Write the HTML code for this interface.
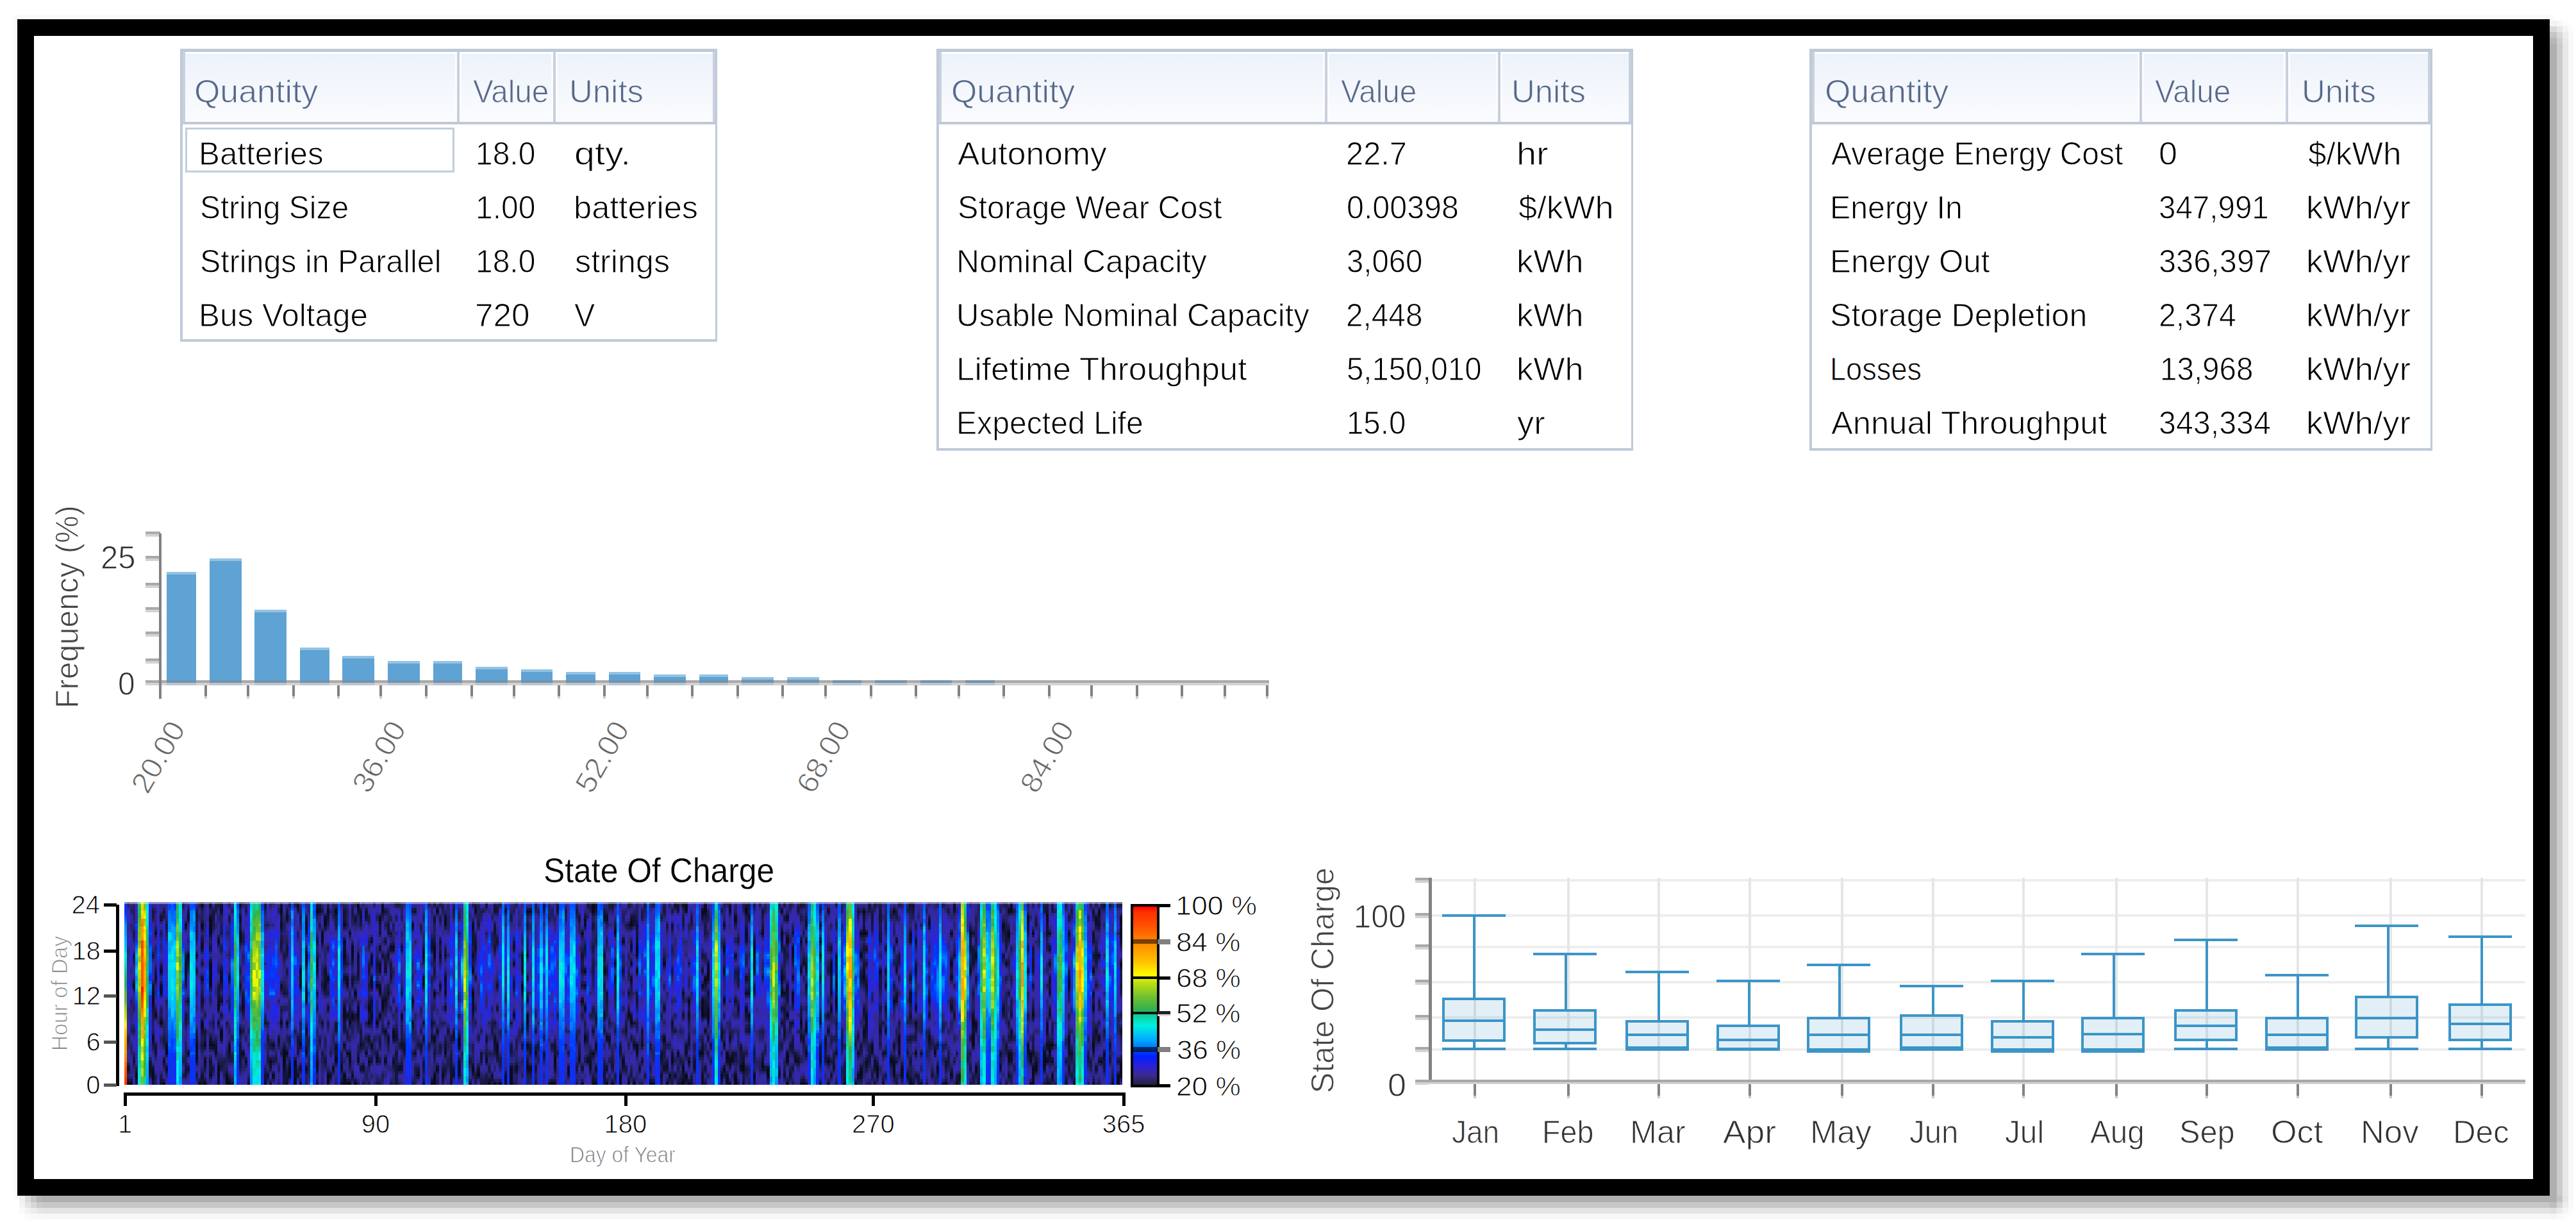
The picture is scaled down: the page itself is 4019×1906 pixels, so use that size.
<!DOCTYPE html><html><head><meta charset="utf-8"><style>
html,body{margin:0;padding:0;background:#fff;}
body{width:4019px;height:1906px;position:relative;overflow:hidden;font-family:"Liberation Sans", sans-serif;}
div{box-sizing:border-box;}
</style></head><body>
<div style="position:absolute;left:21.0px;top:23.0px;width:3963.0px;height:1848.0px;background:#fafafa;"></div>
<div style="position:absolute;left:3978.0px;top:32.0px;width:11.0px;height:8.7px;background:rgb(243,243,243);"></div>
<div style="position:absolute;left:3978.0px;top:40.7px;width:11.0px;height:9.1px;background:rgb(217,217,217);"></div>
<div style="position:absolute;left:3978.0px;top:49.8px;width:11.0px;height:9.2px;background:rgb(197,197,197);"></div>
<div style="position:absolute;left:3978.0px;top:59.0px;width:11.0px;height:9.0px;background:rgb(183,183,183);"></div>
<div style="position:absolute;left:3978.0px;top:68.0px;width:11.0px;height:1797.0px;background:rgb(175,175,175);"></div>
<div style="position:absolute;left:3989.0px;top:32.0px;width:9.0px;height:8.7px;background:rgb(247,247,247);"></div>
<div style="position:absolute;left:3989.0px;top:40.7px;width:9.0px;height:9.1px;background:rgb(231,231,231);"></div>
<div style="position:absolute;left:3989.0px;top:49.8px;width:9.0px;height:9.2px;background:rgb(217,217,217);"></div>
<div style="position:absolute;left:3989.0px;top:59.0px;width:9.0px;height:9.0px;background:rgb(208,208,208);"></div>
<div style="position:absolute;left:3989.0px;top:68.0px;width:9.0px;height:1797.0px;background:rgb(203,203,203);"></div>
<div style="position:absolute;left:3998.0px;top:32.0px;width:9.0px;height:8.7px;background:rgb(252,252,252);"></div>
<div style="position:absolute;left:3998.0px;top:40.7px;width:9.0px;height:9.1px;background:rgb(244,244,244);"></div>
<div style="position:absolute;left:3998.0px;top:49.8px;width:9.0px;height:9.2px;background:rgb(238,238,238);"></div>
<div style="position:absolute;left:3998.0px;top:59.0px;width:9.0px;height:9.0px;background:rgb(234,234,234);"></div>
<div style="position:absolute;left:3998.0px;top:68.0px;width:9.0px;height:1797.0px;background:rgb(232,232,232);"></div>
<div style="position:absolute;left:4007.0px;top:32.0px;width:8.0px;height:8.7px;background:rgb(254,254,254);"></div>
<div style="position:absolute;left:4007.0px;top:40.7px;width:8.0px;height:9.1px;background:rgb(252,252,252);"></div>
<div style="position:absolute;left:4007.0px;top:49.8px;width:8.0px;height:9.2px;background:rgb(250,250,250);"></div>
<div style="position:absolute;left:4007.0px;top:59.0px;width:8.0px;height:9.0px;background:rgb(249,249,249);"></div>
<div style="position:absolute;left:4007.0px;top:68.0px;width:8.0px;height:1797.0px;background:rgb(248,248,248);"></div>
<div style="position:absolute;left:30.0px;top:1865.0px;width:9.0px;height:9.5px;background:rgb(240,240,240);"></div>
<div style="position:absolute;left:39.0px;top:1865.0px;width:8.5px;height:9.5px;background:rgb(218,218,218);"></div>
<div style="position:absolute;left:47.5px;top:1865.0px;width:9.2px;height:9.5px;background:rgb(197,197,197);"></div>
<div style="position:absolute;left:56.7px;top:1865.0px;width:8.6px;height:9.5px;background:rgb(181,181,181);"></div>
<div style="position:absolute;left:65.3px;top:1865.0px;width:3912.7px;height:9.5px;background:rgb(175,175,175);"></div>
<div style="position:absolute;left:30.0px;top:1874.5px;width:9.0px;height:9.5px;background:rgb(244,244,244);"></div>
<div style="position:absolute;left:39.0px;top:1874.5px;width:8.5px;height:9.5px;background:rgb(229,229,229);"></div>
<div style="position:absolute;left:47.5px;top:1874.5px;width:9.2px;height:9.5px;background:rgb(215,215,215);"></div>
<div style="position:absolute;left:56.7px;top:1874.5px;width:8.6px;height:9.5px;background:rgb(203,203,203);"></div>
<div style="position:absolute;left:65.3px;top:1874.5px;width:3912.7px;height:9.5px;background:rgb(199,199,199);"></div>
<div style="position:absolute;left:30.0px;top:1884.0px;width:9.0px;height:9.0px;background:rgb(250,250,250);"></div>
<div style="position:absolute;left:39.0px;top:1884.0px;width:8.5px;height:9.0px;background:rgb(243,243,243);"></div>
<div style="position:absolute;left:47.5px;top:1884.0px;width:9.2px;height:9.0px;background:rgb(236,236,236);"></div>
<div style="position:absolute;left:56.7px;top:1884.0px;width:8.6px;height:9.0px;background:rgb(230,230,230);"></div>
<div style="position:absolute;left:65.3px;top:1884.0px;width:3912.7px;height:9.0px;background:rgb(228,228,228);"></div>
<div style="position:absolute;left:30.0px;top:1893.0px;width:9.0px;height:9.0px;background:rgb(254,254,254);"></div>
<div style="position:absolute;left:39.0px;top:1893.0px;width:8.5px;height:9.0px;background:rgb(251,251,251);"></div>
<div style="position:absolute;left:47.5px;top:1893.0px;width:9.2px;height:9.0px;background:rgb(249,249,249);"></div>
<div style="position:absolute;left:56.7px;top:1893.0px;width:8.6px;height:9.0px;background:rgb(248,248,248);"></div>
<div style="position:absolute;left:65.3px;top:1893.0px;width:3912.7px;height:9.0px;background:rgb(247,247,247);"></div>
<div style="position:absolute;left:3978.0px;top:1865.0px;width:11.0px;height:9.5px;background:rgb(175,175,175);"></div>
<div style="position:absolute;left:3989.0px;top:1865.0px;width:9.0px;height:9.5px;background:rgb(195,195,195);"></div>
<div style="position:absolute;left:3998.0px;top:1865.0px;width:9.0px;height:9.5px;background:rgb(229,229,229);"></div>
<div style="position:absolute;left:4007.0px;top:1865.0px;width:8.0px;height:9.5px;background:rgb(247,247,247);"></div>
<div style="position:absolute;left:3978.0px;top:1874.5px;width:11.0px;height:9.5px;background:rgb(190,190,190);"></div>
<div style="position:absolute;left:3989.0px;top:1874.5px;width:9.0px;height:9.5px;background:rgb(213,213,213);"></div>
<div style="position:absolute;left:3998.0px;top:1874.5px;width:9.0px;height:9.5px;background:rgb(237,237,237);"></div>
<div style="position:absolute;left:4007.0px;top:1874.5px;width:8.0px;height:9.5px;background:rgb(249,249,249);"></div>
<div style="position:absolute;left:3978.0px;top:1884.0px;width:11.0px;height:9.0px;background:rgb(224,224,224);"></div>
<div style="position:absolute;left:3989.0px;top:1884.0px;width:9.0px;height:9.0px;background:rgb(235,235,235);"></div>
<div style="position:absolute;left:3998.0px;top:1884.0px;width:9.0px;height:9.0px;background:rgb(246,246,246);"></div>
<div style="position:absolute;left:4007.0px;top:1884.0px;width:8.0px;height:9.0px;background:rgb(252,252,252);"></div>
<div style="position:absolute;left:3978.0px;top:1893.0px;width:11.0px;height:9.0px;background:rgb(246,246,246);"></div>
<div style="position:absolute;left:3989.0px;top:1893.0px;width:9.0px;height:9.0px;background:rgb(249,249,249);"></div>
<div style="position:absolute;left:3998.0px;top:1893.0px;width:9.0px;height:9.0px;background:rgb(252,252,252);"></div>
<div style="position:absolute;left:4007.0px;top:1893.0px;width:8.0px;height:9.0px;background:rgb(254,254,254);"></div>
<div style="position:absolute;left:27.0px;top:30.0px;width:3951.0px;height:1835.0px;background:#000;"></div>
<div style="position:absolute;left:53.0px;top:56.0px;width:3899.0px;height:1783.0px;background:#fff;"></div>
<div style="position:absolute;left:281.0px;top:76.0px;width:838.0px;height:457.0px;background:#bfcad8;"></div>
<div style="position:absolute;left:285.0px;top:81.0px;width:831.0px;height:448.0px;background:#fff;"></div>
<div style="position:absolute;left:289.0px;top:84.0px;width:823.0px;height:106.0px;background:linear-gradient(#edf2fa,#fbfcfe);"></div>
<div style="position:absolute;left:285.0px;top:81.0px;width:4.0px;height:109.0px;background:#c8d1dd;"></div>
<div style="position:absolute;left:1112.0px;top:81.0px;width:4.0px;height:109.0px;background:#c8d1dd;"></div>
<div style="position:absolute;left:285.0px;top:190.0px;width:831.0px;height:4.0px;background:#bfcad8;"></div>
<div style="position:absolute;left:713.0px;top:81.0px;width:4.0px;height:109.0px;background:#c8d1dd;"></div>
<div style="position:absolute;left:710.0px;top:84.0px;width:3.0px;height:106.0px;background:#fbfcfe;"></div>
<div style="position:absolute;left:717.0px;top:84.0px;width:3.0px;height:106.0px;background:#fbfcfe;"></div>
<div style="position:absolute;left:863.0px;top:81.0px;width:4.0px;height:109.0px;background:#c8d1dd;"></div>
<div style="position:absolute;left:860.0px;top:84.0px;width:3.0px;height:106.0px;background:#fbfcfe;"></div>
<div style="position:absolute;left:867.0px;top:84.0px;width:3.0px;height:106.0px;background:#fbfcfe;"></div>
<div style="position:absolute;left:302.7px;top:114.2px;font-size:50px;color:#56698a;white-space:pre;line-height:normal;transform:scaleX(1.0380);transform-origin:0 0;-webkit-text-stroke:1px #f3f6fb;">Quantity</div>
<div style="position:absolute;left:737.8px;top:114.2px;font-size:50px;color:#56698a;white-space:pre;line-height:normal;transform:scaleX(0.9528);transform-origin:0 0;-webkit-text-stroke:1px #f3f6fb;">Value</div>
<div style="position:absolute;left:887.7px;top:114.2px;font-size:50px;color:#56698a;white-space:pre;line-height:normal;transform:scaleX(1.0184);transform-origin:0 0;-webkit-text-stroke:1px #f3f6fb;">Units</div>
<div style="position:absolute;left:310.1px;top:211.2px;font-size:50px;color:#000;white-space:pre;line-height:normal;transform:scaleX(0.9869);transform-origin:0 0;-webkit-text-stroke:1px #fff;">Batteries</div>
<div style="position:absolute;left:742.4px;top:211.2px;font-size:50px;color:#000;white-space:pre;line-height:normal;transform:scaleX(0.9591);transform-origin:0 0;-webkit-text-stroke:1px #fff;">18.0</div>
<div style="position:absolute;left:895.7px;top:211.2px;font-size:50px;color:#000;white-space:pre;line-height:normal;transform:scaleX(1.1489);transform-origin:0 0;-webkit-text-stroke:1px #fff;">qty.</div>
<div style="position:absolute;left:311.8px;top:295.2px;font-size:50px;color:#000;white-space:pre;line-height:normal;transform:scaleX(0.9600);transform-origin:0 0;-webkit-text-stroke:1px #fff;">String Size</div>
<div style="position:absolute;left:742.4px;top:295.2px;font-size:50px;color:#000;white-space:pre;line-height:normal;transform:scaleX(0.9591);transform-origin:0 0;-webkit-text-stroke:1px #fff;">1.00</div>
<div style="position:absolute;left:894.7px;top:295.2px;font-size:50px;color:#000;white-space:pre;line-height:normal;transform:scaleX(1.0120);transform-origin:0 0;-webkit-text-stroke:1px #fff;">batteries</div>
<div style="position:absolute;left:311.8px;top:379.2px;font-size:50px;color:#000;white-space:pre;line-height:normal;transform:scaleX(0.9674);transform-origin:0 0;-webkit-text-stroke:1px #fff;">Strings in Parallel</div>
<div style="position:absolute;left:742.4px;top:379.2px;font-size:50px;color:#000;white-space:pre;line-height:normal;transform:scaleX(0.9591);transform-origin:0 0;-webkit-text-stroke:1px #fff;">18.0</div>
<div style="position:absolute;left:896.7px;top:379.2px;font-size:50px;color:#000;white-space:pre;line-height:normal;transform:scaleX(1.0052);transform-origin:0 0;-webkit-text-stroke:1px #fff;">strings</div>
<div style="position:absolute;left:310.0px;top:463.2px;font-size:50px;color:#000;white-space:pre;line-height:normal;transform:scaleX(0.9895);transform-origin:0 0;-webkit-text-stroke:1px #fff;">Bus Voltage</div>
<div style="position:absolute;left:741.4px;top:463.2px;font-size:50px;color:#000;white-space:pre;line-height:normal;transform:scaleX(1.0253);transform-origin:0 0;-webkit-text-stroke:1px #fff;">720</div>
<div style="position:absolute;left:895.8px;top:463.2px;font-size:50px;color:#000;white-space:pre;line-height:normal;transform:scaleX(0.9697);transform-origin:0 0;-webkit-text-stroke:1px #fff;">V</div>
<div style="position:absolute;left:289px;top:199px;width:420px;height:70px;border:3px solid #c3cddb;"></div>
<div style="position:absolute;left:1461.0px;top:76.0px;width:1087.0px;height:627.0px;background:#bfcad8;"></div>
<div style="position:absolute;left:1465.0px;top:81.0px;width:1080.0px;height:618.0px;background:#fff;"></div>
<div style="position:absolute;left:1469.0px;top:84.0px;width:1072.0px;height:106.0px;background:linear-gradient(#edf2fa,#fbfcfe);"></div>
<div style="position:absolute;left:1465.0px;top:81.0px;width:4.0px;height:109.0px;background:#c8d1dd;"></div>
<div style="position:absolute;left:2541.0px;top:81.0px;width:4.0px;height:109.0px;background:#c8d1dd;"></div>
<div style="position:absolute;left:1465.0px;top:190.0px;width:1080.0px;height:4.0px;background:#bfcad8;"></div>
<div style="position:absolute;left:2067.0px;top:81.0px;width:4.0px;height:109.0px;background:#c8d1dd;"></div>
<div style="position:absolute;left:2064.0px;top:84.0px;width:3.0px;height:106.0px;background:#fbfcfe;"></div>
<div style="position:absolute;left:2071.0px;top:84.0px;width:3.0px;height:106.0px;background:#fbfcfe;"></div>
<div style="position:absolute;left:2337.0px;top:81.0px;width:4.0px;height:109.0px;background:#c8d1dd;"></div>
<div style="position:absolute;left:2334.0px;top:84.0px;width:3.0px;height:106.0px;background:#fbfcfe;"></div>
<div style="position:absolute;left:2341.0px;top:84.0px;width:3.0px;height:106.0px;background:#fbfcfe;"></div>
<div style="position:absolute;left:1483.7px;top:114.2px;font-size:50px;color:#56698a;white-space:pre;line-height:normal;transform:scaleX(1.0380);transform-origin:0 0;-webkit-text-stroke:1px #f3f6fb;">Quantity</div>
<div style="position:absolute;left:2092.3px;top:114.2px;font-size:50px;color:#56698a;white-space:pre;line-height:normal;transform:scaleX(0.9528);transform-origin:0 0;-webkit-text-stroke:1px #f3f6fb;">Value</div>
<div style="position:absolute;left:2358.2px;top:114.2px;font-size:50px;color:#56698a;white-space:pre;line-height:normal;transform:scaleX(1.0184);transform-origin:0 0;-webkit-text-stroke:1px #f3f6fb;">Units</div>
<div style="position:absolute;left:1494.0px;top:211.2px;font-size:50px;color:#000;white-space:pre;line-height:normal;transform:scaleX(1.0344);transform-origin:0 0;-webkit-text-stroke:1px #fff;">Autonomy</div>
<div style="position:absolute;left:2100.2px;top:211.2px;font-size:50px;color:#000;white-space:pre;line-height:normal;transform:scaleX(0.9756);transform-origin:0 0;-webkit-text-stroke:1px #fff;">22.7</div>
<div style="position:absolute;left:2365.6px;top:211.2px;font-size:50px;color:#000;white-space:pre;line-height:normal;transform:scaleX(1.1180);transform-origin:0 0;-webkit-text-stroke:1px #fff;">hr</div>
<div style="position:absolute;left:1493.8px;top:295.2px;font-size:50px;color:#000;white-space:pre;line-height:normal;transform:scaleX(0.9721);transform-origin:0 0;-webkit-text-stroke:1px #fff;">Storage Wear Cost</div>
<div style="position:absolute;left:2100.7px;top:295.2px;font-size:50px;color:#000;white-space:pre;line-height:normal;transform:scaleX(0.9675);transform-origin:0 0;-webkit-text-stroke:1px #fff;">0.00398</div>
<div style="position:absolute;left:2369.0px;top:295.2px;font-size:50px;color:#000;white-space:pre;line-height:normal;transform:scaleX(1.0488);transform-origin:0 0;-webkit-text-stroke:1px #fff;">$/kWh</div>
<div style="position:absolute;left:1492.0px;top:379.2px;font-size:50px;color:#000;white-space:pre;line-height:normal;transform:scaleX(0.9981);transform-origin:0 0;-webkit-text-stroke:1px #fff;">Nominal Capacity</div>
<div style="position:absolute;left:2100.9px;top:379.2px;font-size:50px;color:#000;white-space:pre;line-height:normal;transform:scaleX(0.9465);transform-origin:0 0;-webkit-text-stroke:1px #fff;">3,060</div>
<div style="position:absolute;left:2366.1px;top:379.2px;font-size:50px;color:#000;white-space:pre;line-height:normal;transform:scaleX(1.0453);transform-origin:0 0;-webkit-text-stroke:1px #fff;">kWh</div>
<div style="position:absolute;left:1492.3px;top:463.2px;font-size:50px;color:#000;white-space:pre;line-height:normal;transform:scaleX(0.9812);transform-origin:0 0;-webkit-text-stroke:1px #fff;">Usable Nominal Capacity</div>
<div style="position:absolute;left:2100.2px;top:463.2px;font-size:50px;color:#000;white-space:pre;line-height:normal;transform:scaleX(0.9544);transform-origin:0 0;-webkit-text-stroke:1px #fff;">2,448</div>
<div style="position:absolute;left:2366.1px;top:463.2px;font-size:50px;color:#000;white-space:pre;line-height:normal;transform:scaleX(1.0453);transform-origin:0 0;-webkit-text-stroke:1px #fff;">kWh</div>
<div style="position:absolute;left:1491.9px;top:547.2px;font-size:50px;color:#000;white-space:pre;line-height:normal;transform:scaleX(1.0216);transform-origin:0 0;-webkit-text-stroke:1px #fff;">Lifetime Throughput</div>
<div style="position:absolute;left:2100.7px;top:547.2px;font-size:50px;color:#000;white-space:pre;line-height:normal;transform:scaleX(0.9463);transform-origin:0 0;-webkit-text-stroke:1px #fff;">5,150,010</div>
<div style="position:absolute;left:2366.1px;top:547.2px;font-size:50px;color:#000;white-space:pre;line-height:normal;transform:scaleX(1.0453);transform-origin:0 0;-webkit-text-stroke:1px #fff;">kWh</div>
<div style="position:absolute;left:1492.1px;top:631.2px;font-size:50px;color:#000;white-space:pre;line-height:normal;transform:scaleX(0.9630);transform-origin:0 0;-webkit-text-stroke:1px #fff;">Expected Life</div>
<div style="position:absolute;left:2101.1px;top:631.2px;font-size:50px;color:#000;white-space:pre;line-height:normal;transform:scaleX(0.9482);transform-origin:0 0;-webkit-text-stroke:1px #fff;">15.0</div>
<div style="position:absolute;left:2367.0px;top:631.2px;font-size:50px;color:#000;white-space:pre;line-height:normal;transform:scaleX(1.0488);transform-origin:0 0;-webkit-text-stroke:1px #fff;">yr</div>
<div style="position:absolute;left:2823.0px;top:76.0px;width:972.0px;height:627.0px;background:#bfcad8;"></div>
<div style="position:absolute;left:2827.0px;top:81.0px;width:965.0px;height:618.0px;background:#fff;"></div>
<div style="position:absolute;left:2831.0px;top:84.0px;width:957.0px;height:106.0px;background:linear-gradient(#edf2fa,#fbfcfe);"></div>
<div style="position:absolute;left:2827.0px;top:81.0px;width:4.0px;height:109.0px;background:#c8d1dd;"></div>
<div style="position:absolute;left:3788.0px;top:81.0px;width:4.0px;height:109.0px;background:#c8d1dd;"></div>
<div style="position:absolute;left:2827.0px;top:190.0px;width:965.0px;height:4.0px;background:#bfcad8;"></div>
<div style="position:absolute;left:3338.0px;top:81.0px;width:4.0px;height:109.0px;background:#c8d1dd;"></div>
<div style="position:absolute;left:3335.0px;top:84.0px;width:3.0px;height:106.0px;background:#fbfcfe;"></div>
<div style="position:absolute;left:3342.0px;top:84.0px;width:3.0px;height:106.0px;background:#fbfcfe;"></div>
<div style="position:absolute;left:3566.0px;top:81.0px;width:4.0px;height:109.0px;background:#c8d1dd;"></div>
<div style="position:absolute;left:3563.0px;top:84.0px;width:3.0px;height:106.0px;background:#fbfcfe;"></div>
<div style="position:absolute;left:3570.0px;top:84.0px;width:3.0px;height:106.0px;background:#fbfcfe;"></div>
<div style="position:absolute;left:2846.7px;top:114.2px;font-size:50px;color:#56698a;white-space:pre;line-height:normal;transform:scaleX(1.0380);transform-origin:0 0;-webkit-text-stroke:1px #f3f6fb;">Quantity</div>
<div style="position:absolute;left:3362.4px;top:114.2px;font-size:50px;color:#56698a;white-space:pre;line-height:normal;transform:scaleX(0.9528);transform-origin:0 0;-webkit-text-stroke:1px #f3f6fb;">Value</div>
<div style="position:absolute;left:3590.9px;top:114.2px;font-size:50px;color:#56698a;white-space:pre;line-height:normal;transform:scaleX(1.0184);transform-origin:0 0;-webkit-text-stroke:1px #f3f6fb;">Units</div>
<div style="position:absolute;left:2857.0px;top:211.2px;font-size:50px;color:#000;white-space:pre;line-height:normal;transform:scaleX(0.9599);transform-origin:0 0;-webkit-text-stroke:1px #fff;">Average Energy Cost</div>
<div style="position:absolute;left:3367.9px;top:211.2px;font-size:50px;color:#000;white-space:pre;line-height:normal;transform:scaleX(1.0417);transform-origin:0 0;-webkit-text-stroke:1px #fff;">0</div>
<div style="position:absolute;left:3601.2px;top:211.2px;font-size:50px;color:#000;white-space:pre;line-height:normal;transform:scaleX(1.0271);transform-origin:0 0;-webkit-text-stroke:1px #fff;">$/kWh</div>
<div style="position:absolute;left:2855.1px;top:295.2px;font-size:50px;color:#000;white-space:pre;line-height:normal;transform:scaleX(0.9662);transform-origin:0 0;-webkit-text-stroke:1px #fff;">Energy In</div>
<div style="position:absolute;left:3368.3px;top:295.2px;font-size:50px;color:#000;white-space:pre;line-height:normal;transform:scaleX(0.9505);transform-origin:0 0;-webkit-text-stroke:1px #fff;">347,991</div>
<div style="position:absolute;left:3598.3px;top:295.2px;font-size:50px;color:#000;white-space:pre;line-height:normal;transform:scaleX(1.0478);transform-origin:0 0;-webkit-text-stroke:1px #fff;">kWh/yr</div>
<div style="position:absolute;left:2855.1px;top:379.2px;font-size:50px;color:#000;white-space:pre;line-height:normal;transform:scaleX(0.9859);transform-origin:0 0;-webkit-text-stroke:1px #fff;">Energy Out</div>
<div style="position:absolute;left:3368.3px;top:379.2px;font-size:50px;color:#000;white-space:pre;line-height:normal;transform:scaleX(0.9745);transform-origin:0 0;-webkit-text-stroke:1px #fff;">336,397</div>
<div style="position:absolute;left:3598.3px;top:379.2px;font-size:50px;color:#000;white-space:pre;line-height:normal;transform:scaleX(1.0478);transform-origin:0 0;-webkit-text-stroke:1px #fff;">kWh/yr</div>
<div style="position:absolute;left:2854.7px;top:463.2px;font-size:50px;color:#000;white-space:pre;line-height:normal;transform:scaleX(1.0025);transform-origin:0 0;-webkit-text-stroke:1px #fff;">Storage Depletion</div>
<div style="position:absolute;left:3367.6px;top:463.2px;font-size:50px;color:#000;white-space:pre;line-height:normal;transform:scaleX(0.9649);transform-origin:0 0;-webkit-text-stroke:1px #fff;">2,374</div>
<div style="position:absolute;left:3598.3px;top:463.2px;font-size:50px;color:#000;white-space:pre;line-height:normal;transform:scaleX(1.0478);transform-origin:0 0;-webkit-text-stroke:1px #fff;">kWh/yr</div>
<div style="position:absolute;left:2855.4px;top:547.2px;font-size:50px;color:#000;white-space:pre;line-height:normal;transform:scaleX(0.9034);transform-origin:0 0;-webkit-text-stroke:1px #fff;">Losses</div>
<div style="position:absolute;left:3370.4px;top:547.2px;font-size:50px;color:#000;white-space:pre;line-height:normal;transform:scaleX(0.9508);transform-origin:0 0;-webkit-text-stroke:1px #fff;">13,968</div>
<div style="position:absolute;left:3598.3px;top:547.2px;font-size:50px;color:#000;white-space:pre;line-height:normal;transform:scaleX(1.0478);transform-origin:0 0;-webkit-text-stroke:1px #fff;">kWh/yr</div>
<div style="position:absolute;left:2857.0px;top:631.2px;font-size:50px;color:#000;white-space:pre;line-height:normal;transform:scaleX(1.0142);transform-origin:0 0;-webkit-text-stroke:1px #fff;">Annual Throughput</div>
<div style="position:absolute;left:3368.3px;top:631.2px;font-size:50px;color:#000;white-space:pre;line-height:normal;transform:scaleX(0.9677);transform-origin:0 0;-webkit-text-stroke:1px #fff;">343,334</div>
<div style="position:absolute;left:3598.3px;top:631.2px;font-size:50px;color:#000;white-space:pre;line-height:normal;transform:scaleX(1.0478);transform-origin:0 0;-webkit-text-stroke:1px #fff;">kWh/yr</div>
<div style="position:absolute;left:227.0px;top:829.0px;width:23.0px;height:4.0px;background:#aaaaaa;"></div>
<div style="position:absolute;left:227.0px;top:833.0px;width:23.0px;height:4.0px;background:#d2d2d2;"></div>
<div style="position:absolute;left:227.0px;top:867.0px;width:23.0px;height:4.0px;background:#aaaaaa;"></div>
<div style="position:absolute;left:227.0px;top:871.0px;width:23.0px;height:4.0px;background:#d2d2d2;"></div>
<div style="position:absolute;left:227.0px;top:909.0px;width:23.0px;height:4.0px;background:#aaaaaa;"></div>
<div style="position:absolute;left:227.0px;top:913.0px;width:23.0px;height:4.0px;background:#d2d2d2;"></div>
<div style="position:absolute;left:227.0px;top:947.0px;width:23.0px;height:4.0px;background:#aaaaaa;"></div>
<div style="position:absolute;left:227.0px;top:951.0px;width:23.0px;height:4.0px;background:#d2d2d2;"></div>
<div style="position:absolute;left:227.0px;top:985.0px;width:23.0px;height:4.0px;background:#aaaaaa;"></div>
<div style="position:absolute;left:227.0px;top:989.0px;width:23.0px;height:4.0px;background:#d2d2d2;"></div>
<div style="position:absolute;left:227.0px;top:1027.0px;width:23.0px;height:4.0px;background:#aaaaaa;"></div>
<div style="position:absolute;left:227.0px;top:1031.0px;width:23.0px;height:4.0px;background:#d2d2d2;"></div>
<div style="position:absolute;left:227.0px;top:1061.0px;width:1753.0px;height:4.0px;background:#a9a9a9;"></div>
<div style="position:absolute;left:227.0px;top:1065.0px;width:1753.0px;height:4.0px;background:#d3d3d3;"></div>
<div style="position:absolute;left:260.0px;top:892.0px;width:46.0px;height:169.0px;background:#5ea3d3;"></div>
<div style="position:absolute;left:260.0px;top:892.0px;width:46.0px;height:4.0px;background:#94c3e3;"></div>
<div style="position:absolute;left:260.0px;top:1061.0px;width:46.0px;height:4.0px;background:#7592aa;"></div>
<div style="position:absolute;left:260.0px;top:1065.0px;width:46.0px;height:4.0px;background:#b9c6d0;"></div>
<div style="position:absolute;left:327.0px;top:871.0px;width:50.0px;height:190.0px;background:#5ea3d3;"></div>
<div style="position:absolute;left:327.0px;top:871.0px;width:50.0px;height:4.0px;background:#94c3e3;"></div>
<div style="position:absolute;left:327.0px;top:1061.0px;width:50.0px;height:4.0px;background:#7592aa;"></div>
<div style="position:absolute;left:327.0px;top:1065.0px;width:50.0px;height:4.0px;background:#b9c6d0;"></div>
<div style="position:absolute;left:397.0px;top:951.0px;width:50.0px;height:110.0px;background:#5ea3d3;"></div>
<div style="position:absolute;left:397.0px;top:951.0px;width:50.0px;height:4.0px;background:#94c3e3;"></div>
<div style="position:absolute;left:397.0px;top:1061.0px;width:50.0px;height:4.0px;background:#7592aa;"></div>
<div style="position:absolute;left:397.0px;top:1065.0px;width:50.0px;height:4.0px;background:#b9c6d0;"></div>
<div style="position:absolute;left:468.0px;top:1010.0px;width:45.5px;height:51.0px;background:#5ea3d3;"></div>
<div style="position:absolute;left:468.0px;top:1010.0px;width:45.5px;height:4.0px;background:#94c3e3;"></div>
<div style="position:absolute;left:468.0px;top:1061.0px;width:45.5px;height:4.0px;background:#7592aa;"></div>
<div style="position:absolute;left:468.0px;top:1065.0px;width:45.5px;height:4.0px;background:#b9c6d0;"></div>
<div style="position:absolute;left:534.0px;top:1023.0px;width:50.0px;height:38.0px;background:#5ea3d3;"></div>
<div style="position:absolute;left:534.0px;top:1023.0px;width:50.0px;height:4.0px;background:#94c3e3;"></div>
<div style="position:absolute;left:534.0px;top:1061.0px;width:50.0px;height:4.0px;background:#7592aa;"></div>
<div style="position:absolute;left:534.0px;top:1065.0px;width:50.0px;height:4.0px;background:#b9c6d0;"></div>
<div style="position:absolute;left:605.0px;top:1031.0px;width:50.0px;height:30.0px;background:#5ea3d3;"></div>
<div style="position:absolute;left:605.0px;top:1031.0px;width:50.0px;height:4.0px;background:#94c3e3;"></div>
<div style="position:absolute;left:605.0px;top:1061.0px;width:50.0px;height:4.0px;background:#7592aa;"></div>
<div style="position:absolute;left:605.0px;top:1065.0px;width:50.0px;height:4.0px;background:#b9c6d0;"></div>
<div style="position:absolute;left:675.5px;top:1031.0px;width:45.5px;height:30.0px;background:#5ea3d3;"></div>
<div style="position:absolute;left:675.5px;top:1031.0px;width:45.5px;height:4.0px;background:#94c3e3;"></div>
<div style="position:absolute;left:675.5px;top:1061.0px;width:45.5px;height:4.0px;background:#7592aa;"></div>
<div style="position:absolute;left:675.5px;top:1065.0px;width:45.5px;height:4.0px;background:#b9c6d0;"></div>
<div style="position:absolute;left:742.0px;top:1040.0px;width:50.0px;height:21.0px;background:#5ea3d3;"></div>
<div style="position:absolute;left:742.0px;top:1040.0px;width:50.0px;height:4.0px;background:#94c3e3;"></div>
<div style="position:absolute;left:742.0px;top:1061.0px;width:50.0px;height:4.0px;background:#7592aa;"></div>
<div style="position:absolute;left:742.0px;top:1065.0px;width:50.0px;height:4.0px;background:#b9c6d0;"></div>
<div style="position:absolute;left:813.0px;top:1044.0px;width:49.0px;height:17.0px;background:#5ea3d3;"></div>
<div style="position:absolute;left:813.0px;top:1044.0px;width:49.0px;height:4.0px;background:#94c3e3;"></div>
<div style="position:absolute;left:813.0px;top:1061.0px;width:49.0px;height:4.0px;background:#7592aa;"></div>
<div style="position:absolute;left:813.0px;top:1065.0px;width:49.0px;height:4.0px;background:#b9c6d0;"></div>
<div style="position:absolute;left:883.0px;top:1048.0px;width:46.0px;height:13.0px;background:#5ea3d3;"></div>
<div style="position:absolute;left:883.0px;top:1048.0px;width:46.0px;height:4.0px;background:#94c3e3;"></div>
<div style="position:absolute;left:883.0px;top:1061.0px;width:46.0px;height:4.0px;background:#7592aa;"></div>
<div style="position:absolute;left:883.0px;top:1065.0px;width:46.0px;height:4.0px;background:#b9c6d0;"></div>
<div style="position:absolute;left:950.0px;top:1048.0px;width:49.0px;height:13.0px;background:#5ea3d3;"></div>
<div style="position:absolute;left:950.0px;top:1048.0px;width:49.0px;height:4.0px;background:#94c3e3;"></div>
<div style="position:absolute;left:950.0px;top:1061.0px;width:49.0px;height:4.0px;background:#7592aa;"></div>
<div style="position:absolute;left:950.0px;top:1065.0px;width:49.0px;height:4.0px;background:#b9c6d0;"></div>
<div style="position:absolute;left:1020.0px;top:1052.0px;width:50.0px;height:9.0px;background:#5ea3d3;"></div>
<div style="position:absolute;left:1020.0px;top:1052.0px;width:50.0px;height:4.0px;background:#94c3e3;"></div>
<div style="position:absolute;left:1020.0px;top:1061.0px;width:50.0px;height:4.0px;background:#7592aa;"></div>
<div style="position:absolute;left:1020.0px;top:1065.0px;width:50.0px;height:4.0px;background:#b9c6d0;"></div>
<div style="position:absolute;left:1091.0px;top:1052.0px;width:45.0px;height:9.0px;background:#5ea3d3;"></div>
<div style="position:absolute;left:1091.0px;top:1052.0px;width:45.0px;height:4.0px;background:#94c3e3;"></div>
<div style="position:absolute;left:1091.0px;top:1061.0px;width:45.0px;height:4.0px;background:#7592aa;"></div>
<div style="position:absolute;left:1091.0px;top:1065.0px;width:45.0px;height:4.0px;background:#b9c6d0;"></div>
<div style="position:absolute;left:1157.0px;top:1056.0px;width:50.0px;height:5.0px;background:#5ea3d3;"></div>
<div style="position:absolute;left:1157.0px;top:1056.0px;width:50.0px;height:4.0px;background:#94c3e3;"></div>
<div style="position:absolute;left:1157.0px;top:1061.0px;width:50.0px;height:4.0px;background:#7592aa;"></div>
<div style="position:absolute;left:1157.0px;top:1065.0px;width:50.0px;height:4.0px;background:#b9c6d0;"></div>
<div style="position:absolute;left:1228.0px;top:1056.0px;width:50.0px;height:5.0px;background:#5ea3d3;"></div>
<div style="position:absolute;left:1228.0px;top:1056.0px;width:50.0px;height:4.0px;background:#94c3e3;"></div>
<div style="position:absolute;left:1228.0px;top:1061.0px;width:50.0px;height:4.0px;background:#7592aa;"></div>
<div style="position:absolute;left:1228.0px;top:1065.0px;width:50.0px;height:4.0px;background:#b9c6d0;"></div>
<div style="position:absolute;left:1299.0px;top:1061.0px;width:45.0px;height:4.0px;background:#7592aa;"></div>
<div style="position:absolute;left:1299.0px;top:1065.0px;width:45.0px;height:4.0px;background:#b9c6d0;"></div>
<div style="position:absolute;left:1365.0px;top:1061.0px;width:50.0px;height:4.0px;background:#7592aa;"></div>
<div style="position:absolute;left:1365.0px;top:1065.0px;width:50.0px;height:4.0px;background:#b9c6d0;"></div>
<div style="position:absolute;left:1436.0px;top:1061.0px;width:49.0px;height:4.0px;background:#7592aa;"></div>
<div style="position:absolute;left:1436.0px;top:1065.0px;width:49.0px;height:4.0px;background:#b9c6d0;"></div>
<div style="position:absolute;left:1506.0px;top:1061.0px;width:46.0px;height:4.0px;background:#7592aa;"></div>
<div style="position:absolute;left:1506.0px;top:1065.0px;width:46.0px;height:4.0px;background:#b9c6d0;"></div>
<div style="position:absolute;left:248.0px;top:1069.0px;width:4.0px;height:17.0px;background:#828282;"></div>
<div style="position:absolute;left:248.0px;top:1086.0px;width:4.0px;height:4.0px;background:#d0d0d0;"></div>
<div style="position:absolute;left:318.5px;top:1069.0px;width:4.0px;height:17.0px;background:#828282;"></div>
<div style="position:absolute;left:318.5px;top:1086.0px;width:4.0px;height:4.0px;background:#d0d0d0;"></div>
<div style="position:absolute;left:385.0px;top:1069.0px;width:4.0px;height:17.0px;background:#828282;"></div>
<div style="position:absolute;left:385.0px;top:1086.0px;width:4.0px;height:4.0px;background:#d0d0d0;"></div>
<div style="position:absolute;left:455.5px;top:1069.0px;width:4.0px;height:17.0px;background:#828282;"></div>
<div style="position:absolute;left:455.5px;top:1086.0px;width:4.0px;height:4.0px;background:#d0d0d0;"></div>
<div style="position:absolute;left:526.0px;top:1069.0px;width:4.0px;height:17.0px;background:#828282;"></div>
<div style="position:absolute;left:526.0px;top:1086.0px;width:4.0px;height:4.0px;background:#d0d0d0;"></div>
<div style="position:absolute;left:592.3px;top:1069.0px;width:4.0px;height:17.0px;background:#828282;"></div>
<div style="position:absolute;left:592.3px;top:1086.0px;width:4.0px;height:4.0px;background:#d0d0d0;"></div>
<div style="position:absolute;left:662.8px;top:1069.0px;width:4.0px;height:17.0px;background:#828282;"></div>
<div style="position:absolute;left:662.8px;top:1086.0px;width:4.0px;height:4.0px;background:#d0d0d0;"></div>
<div style="position:absolute;left:733.5px;top:1069.0px;width:4.0px;height:17.0px;background:#828282;"></div>
<div style="position:absolute;left:733.5px;top:1086.0px;width:4.0px;height:4.0px;background:#d0d0d0;"></div>
<div style="position:absolute;left:799.9px;top:1069.0px;width:4.0px;height:17.0px;background:#828282;"></div>
<div style="position:absolute;left:799.9px;top:1086.0px;width:4.0px;height:4.0px;background:#d0d0d0;"></div>
<div style="position:absolute;left:870.3px;top:1069.0px;width:4.0px;height:17.0px;background:#828282;"></div>
<div style="position:absolute;left:870.3px;top:1086.0px;width:4.0px;height:4.0px;background:#d0d0d0;"></div>
<div style="position:absolute;left:940.8px;top:1069.0px;width:4.0px;height:17.0px;background:#828282;"></div>
<div style="position:absolute;left:940.8px;top:1086.0px;width:4.0px;height:4.0px;background:#d0d0d0;"></div>
<div style="position:absolute;left:1007.5px;top:1069.0px;width:4.0px;height:17.0px;background:#828282;"></div>
<div style="position:absolute;left:1007.5px;top:1086.0px;width:4.0px;height:4.0px;background:#d0d0d0;"></div>
<div style="position:absolute;left:1078.0px;top:1069.0px;width:4.0px;height:17.0px;background:#828282;"></div>
<div style="position:absolute;left:1078.0px;top:1086.0px;width:4.0px;height:4.0px;background:#d0d0d0;"></div>
<div style="position:absolute;left:1148.7px;top:1069.0px;width:4.0px;height:17.0px;background:#828282;"></div>
<div style="position:absolute;left:1148.7px;top:1086.0px;width:4.0px;height:4.0px;background:#d0d0d0;"></div>
<div style="position:absolute;left:1219.4px;top:1069.0px;width:4.0px;height:17.0px;background:#828282;"></div>
<div style="position:absolute;left:1219.4px;top:1086.0px;width:4.0px;height:4.0px;background:#d0d0d0;"></div>
<div style="position:absolute;left:1285.9px;top:1069.0px;width:4.0px;height:17.0px;background:#828282;"></div>
<div style="position:absolute;left:1285.9px;top:1086.0px;width:4.0px;height:4.0px;background:#d0d0d0;"></div>
<div style="position:absolute;left:1356.7px;top:1069.0px;width:4.0px;height:17.0px;background:#828282;"></div>
<div style="position:absolute;left:1356.7px;top:1086.0px;width:4.0px;height:4.0px;background:#d0d0d0;"></div>
<div style="position:absolute;left:1427.2px;top:1069.0px;width:4.0px;height:17.0px;background:#828282;"></div>
<div style="position:absolute;left:1427.2px;top:1086.0px;width:4.0px;height:4.0px;background:#d0d0d0;"></div>
<div style="position:absolute;left:1493.7px;top:1069.0px;width:4.0px;height:17.0px;background:#828282;"></div>
<div style="position:absolute;left:1493.7px;top:1086.0px;width:4.0px;height:4.0px;background:#d0d0d0;"></div>
<div style="position:absolute;left:1564.1px;top:1069.0px;width:4.0px;height:17.0px;background:#828282;"></div>
<div style="position:absolute;left:1564.1px;top:1086.0px;width:4.0px;height:4.0px;background:#d0d0d0;"></div>
<div style="position:absolute;left:1634.6px;top:1069.0px;width:4.0px;height:17.0px;background:#828282;"></div>
<div style="position:absolute;left:1634.6px;top:1086.0px;width:4.0px;height:4.0px;background:#d0d0d0;"></div>
<div style="position:absolute;left:1701.1px;top:1069.0px;width:4.0px;height:17.0px;background:#828282;"></div>
<div style="position:absolute;left:1701.1px;top:1086.0px;width:4.0px;height:4.0px;background:#d0d0d0;"></div>
<div style="position:absolute;left:1771.6px;top:1069.0px;width:4.0px;height:17.0px;background:#828282;"></div>
<div style="position:absolute;left:1771.6px;top:1086.0px;width:4.0px;height:4.0px;background:#d0d0d0;"></div>
<div style="position:absolute;left:1842.4px;top:1069.0px;width:4.0px;height:17.0px;background:#828282;"></div>
<div style="position:absolute;left:1842.4px;top:1086.0px;width:4.0px;height:4.0px;background:#d0d0d0;"></div>
<div style="position:absolute;left:1908.9px;top:1069.0px;width:4.0px;height:17.0px;background:#828282;"></div>
<div style="position:absolute;left:1908.9px;top:1086.0px;width:4.0px;height:4.0px;background:#d0d0d0;"></div>
<div style="position:absolute;left:1975.3px;top:1069.0px;width:4.0px;height:17.0px;background:#828282;"></div>
<div style="position:absolute;left:1975.3px;top:1086.0px;width:4.0px;height:4.0px;background:#d0d0d0;"></div>
<div style="position:absolute;left:248.0px;top:832.0px;width:4.0px;height:258.0px;background:#828282;"></div>
<div style="position:absolute;left:156.5px;top:840.8px;font-size:50px;color:#333;white-space:pre;line-height:normal;transform:scaleX(0.9804);transform-origin:0 0;-webkit-text-stroke:1px #fff;">25</div>
<div style="position:absolute;left:184.1px;top:1037.8px;font-size:50px;color:#333;white-space:pre;line-height:normal;transform:scaleX(0.9583);transform-origin:0 0;-webkit-text-stroke:1px #fff;">0</div>
<div style="position:absolute;left:117.1px;top:1055.8px;font-size:50px;color:#444;white-space:pre;line-height:normal;transform-origin:3.9px 45.2px;transform:rotate(-90deg) scaleX(0.9665);-webkit-text-stroke:1px #fff;">Frequency (%)</div>
<div style="position:absolute;left:227.6px;top:1196.4px;font-size:46px;color:#666;white-space:pre;line-height:normal;transform-origin:2.4px 41.6px;transform:rotate(-60deg) scaleX(1.0442);-webkit-text-stroke:1px #fff;">20.00</div>
<div style="position:absolute;left:572.6px;top:1196.4px;font-size:46px;color:#666;white-space:pre;line-height:normal;transform-origin:1.7px 41.6px;transform:rotate(-60deg) scaleX(1.0378);-webkit-text-stroke:1px #fff;">36.00</div>
<div style="position:absolute;left:920.9px;top:1196.4px;font-size:46px;color:#666;white-space:pre;line-height:normal;transform-origin:1.9px 41.6px;transform:rotate(-60deg) scaleX(1.0399);-webkit-text-stroke:1px #fff;">52.00</div>
<div style="position:absolute;left:1265.5px;top:1196.4px;font-size:46px;color:#666;white-space:pre;line-height:normal;transform-origin:2.4px 41.6px;transform:rotate(-60deg) scaleX(1.0442);-webkit-text-stroke:1px #fff;">68.00</div>
<div style="position:absolute;left:1614.7px;top:1196.4px;font-size:46px;color:#666;white-space:pre;line-height:normal;transform-origin:1.9px 41.6px;transform:rotate(-60deg) scaleX(1.0399);-webkit-text-stroke:1px #fff;">84.00</div>

<canvas id="hm" width="365" height="67" style="position:absolute;left:194px;top:1407px;width:1557px;height:285px;background:#2c2a8c;image-rendering:pixelated;"></canvas>
<div style="position:absolute;left:194px;top:1406px;width:1557px;height:4px;background:rgba(255,255,255,0.45);"></div>
<script>
(function(){
var codes="X1100586420020213335420033010120110021004300214555311222100013210300430100022132000000121002000000012013301210320010101213125420012212100231310210301312323222133223321002101330012032010010212322331012012201012310001353102120022003021020454200010220003543031002032056422000212201032000231020113202223221002265200014533543200001346302011310012443201256532200011322310";
var LV=[24,29.5,35,44,55,66,78,88,96];
var CM=[[19,10,10,30],[22,28,28,80],[25,50,40,150],[28,52,40,190],[31,36,36,225],[34,0,56,255],[38,0,128,255],[42,0,190,255],[46,0,240,230],[51,16,210,160],[55,48,176,80],[61,112,192,48],[66,192,224,16],[69,255,255,0],[75,255,192,0],[80,255,160,0],[85,255,128,0],[91,255,80,0],[100,255,0,0]];
function col(v){
  if(v<=CM[0][0]) return CM[0].slice(1);
  for(var i=1;i<CM.length;i++){ if(v<=CM[i][0]){ var a=CM[i-1],b=CM[i],t=(v-a[0])/(b[0]-a[0]); return [a[1]+(b[1]-a[1])*t,a[2]+(b[2]-a[2])*t,a[3]+(b[3]-a[3])*t]; } }
  return CM[CM.length-1].slice(1);
}
var seed=12345; function rnd(){ seed=(seed*1103515245+12345)%2147483648; return seed/2147483648; }
var W=365,H=67;
var c=document.getElementById('hm'); var ctx=c.getContext('2d');
var img=ctx.createImageData(W,H);
// hourly noise grid
var NH=25;
for(var d=0;d<W;d++){
  var hn=[]; for(var h=0;h<NH;h++){ hn.push(rnd()); }
  var code=codes.charAt(d);
  for(var y=0;y<H;y++){
    var t=y/(H-1);
    var hp=t*(NH-1), h0=Math.floor(hp), h1=Math.min(NH-1,h0+1), ft=hp-h0;
    var n=hn[h0]*(1-ft)+hn[h1]*ft;
    var v;
    if(code==='X'){
      v = 33 + 62*Math.pow(t,1.3);
      v += (n-0.5)*4;
    } else {
      var L=LV[+code];
      var darkb = (t>0.7)? (t-0.7)*10 : (t<0.1? (0.1-t)*20 : 0);
      var bg = 18 + n*10 - darkb;
      if(+code===0){ v=bg; }
      else {
        var c=+code;
        var gs = (c>=4)?0.36:(c===3?0.32:0.27);
        var gg = Math.exp(-Math.pow((t-0.38)/gs,2));
        var f;
        if(c>=4) f = 0.5 + 0.5*gg;
        else if(c===3) f = 0.4 + 0.6*gg;
        else f = 0.1 + 0.9*gg;
        var n2 = hn[(h0+3)%NH];
        var add = (L-24)*f*(0.9+0.2*n2);
        if(c>=3) v = Math.max(bg, 24) + add; else v = bg + add;
      }
    }
    if(code!=='X'){
      var sp=0;
      for(var k=-1;k<=1;k+=2){
        var dd=d+k; if(dd<0||dd>=W) continue;
        var ck=codes.charAt(dd); if(ck==='X') continue; ck=+ck;
        if(ck>=4){ var g2=Math.exp(-Math.pow((t-0.38)/0.3,2)); sp=Math.max(sp, 0.42*(LV[ck]-24)*g2); }
      }
      var bgn = 18 + n*10;
      if(bgn+sp > v) v = bgn+sp;
    }
    var cc=col(v), p=(y*W+d)*4;
    img.data[p]=cc[0]; img.data[p+1]=cc[1]; img.data[p+2]=cc[2]; img.data[p+3]=255;
  }
}
ctx.putImageData(img,0,0);
})();
</script>

<div style="position:absolute;left:847.8px;top:1327.0px;font-size:53px;color:#000;white-space:pre;line-height:normal;transform:scaleX(0.9408);transform-origin:0 0;-webkit-text-stroke:0.3px #fff;">State Of Charge</div>
<div style="position:absolute;left:181.0px;top:1411.0px;width:5.0px;height:283.0px;background:#000;"></div>
<div style="position:absolute;left:162.0px;top:1408.5px;width:20.0px;height:5.0px;background:#000;"></div>
<div style="position:absolute;left:162.0px;top:1481.1px;width:20.0px;height:5.0px;background:#000;"></div>
<div style="position:absolute;left:162.0px;top:1550.5px;width:20.0px;height:5.0px;background:#555;"></div>
<div style="position:absolute;left:162.0px;top:1622.5px;width:20.0px;height:5.0px;background:#555;"></div>
<div style="position:absolute;left:162.0px;top:1689.5px;width:20.0px;height:5.0px;background:#555;"></div>
<div style="position:absolute;left:111.6px;top:1388.8px;font-size:40px;color:#000;white-space:pre;line-height:normal;-webkit-text-stroke:1px #fff;">24</div>
<div style="position:absolute;left:112.2px;top:1461.4px;font-size:40px;color:#000;white-space:pre;line-height:normal;-webkit-text-stroke:1px #fff;">18</div>
<div style="position:absolute;left:112.6px;top:1530.8px;font-size:40px;color:#000;white-space:pre;line-height:normal;-webkit-text-stroke:1px #fff;">12</div>
<div style="position:absolute;left:134.4px;top:1602.8px;font-size:40px;color:#000;white-space:pre;line-height:normal;-webkit-text-stroke:1px #fff;">6</div>
<div style="position:absolute;left:134.2px;top:1669.8px;font-size:40px;color:#000;white-space:pre;line-height:normal;-webkit-text-stroke:1px #fff;">0</div>
<div style="position:absolute;left:102.3px;top:1605.3px;font-size:35px;color:#8a8a8a;white-space:pre;line-height:normal;transform-origin:2.7px 31.7px;transform:rotate(-90deg) scaleX(0.9623);-webkit-text-stroke:1px #fff;">Hour of Day</div>
<div style="position:absolute;left:193.0px;top:1704.0px;width:1560.0px;height:5.0px;background:#000;"></div>
<div style="position:absolute;left:193.3px;top:1704.0px;width:5.0px;height:21.0px;background:#000;"></div>
<div style="position:absolute;left:184.1px;top:1730.8px;font-size:40px;color:#000;white-space:pre;line-height:normal;-webkit-text-stroke:1px #fff;">1</div>
<div style="position:absolute;left:583.7px;top:1704.0px;width:5.0px;height:21.0px;background:#000;"></div>
<div style="position:absolute;left:563.8px;top:1730.8px;font-size:40px;color:#000;white-space:pre;line-height:normal;-webkit-text-stroke:1px #fff;">90</div>
<div style="position:absolute;left:974.2px;top:1704.0px;width:5.0px;height:21.0px;background:#000;"></div>
<div style="position:absolute;left:942.6px;top:1730.8px;font-size:40px;color:#000;white-space:pre;line-height:normal;-webkit-text-stroke:1px #fff;">180</div>
<div style="position:absolute;left:1360.2px;top:1704.0px;width:5.0px;height:21.0px;background:#000;"></div>
<div style="position:absolute;left:1329.1px;top:1730.8px;font-size:40px;color:#000;white-space:pre;line-height:normal;-webkit-text-stroke:1px #fff;">270</div>
<div style="position:absolute;left:1750.5px;top:1704.0px;width:5.0px;height:21.0px;background:#000;"></div>
<div style="position:absolute;left:1719.8px;top:1730.8px;font-size:40px;color:#000;white-space:pre;line-height:normal;-webkit-text-stroke:1px #fff;">365</div>
<div style="position:absolute;left:889.0px;top:1781.3px;font-size:35px;color:#7a7a80;white-space:pre;line-height:normal;transform:scaleX(0.9111);transform-origin:0 0;-webkit-text-stroke:1px #fff;">Day of Year</div>
<div style="position:absolute;left:1764px;top:1410px;width:45px;height:286px;background:#000;"></div>
<div style="position:absolute;left:1768px;top:1413.7px;width:37px;height:278px;background:linear-gradient(#ff0000,#ff3000 3.1%,#ff5000 10.8%,#ff8000 18.4%,#ffa000 24.7%,#ffc000 30.9%,#ffff00 39%,#d8ec08 41%,#c0e010 42.6%,#70c030 50.7%,#30b050 57.8%,#20c080 59.6%,#10d0a0 61.4%,#00f0e0 66.8%,#00b0ff 74%,#0080ff 78.5%,#0040ff 81.6%,#0020ff 83.9%,#3020d0 90.1%,#3a2a90 94.6%,#202040 100%);"></div>
<div style="position:absolute;left:1768.0px;top:1465.0px;width:37.0px;height:7.0px;background:rgba(0,0,0,0.52);"></div>
<div style="position:absolute;left:1768.0px;top:1523.0px;width:37.0px;height:4.0px;background:#000;"></div>
<div style="position:absolute;left:1768.0px;top:1577.5px;width:37.0px;height:4.5px;background:#111;"></div>
<div style="position:absolute;left:1768.0px;top:1632.5px;width:37.0px;height:8.0px;background:rgba(0,0,0,0.6);"></div>
<div style="position:absolute;left:1806.0px;top:1409.5px;width:20.0px;height:5.0px;background:#000;"></div>
<div style="position:absolute;left:1806.0px;top:1464.5px;width:20.0px;height:8.0px;background:#808080;"></div>
<div style="position:absolute;left:1806.0px;top:1522.7px;width:20.0px;height:5.0px;background:#000;"></div>
<div style="position:absolute;left:1806.0px;top:1577.2px;width:20.0px;height:5.0px;background:#222;"></div>
<div style="position:absolute;left:1806.0px;top:1632.5px;width:20.0px;height:8.0px;background:#808080;"></div>
<div style="position:absolute;left:1806.0px;top:1691.0px;width:20.0px;height:5.0px;background:#000;"></div>
<div style="position:absolute;left:1806.0px;top:1582.0px;width:20.0px;height:3.0px;background:#dcdcdc;"></div>
<div style="position:absolute;left:1833.6px;top:1389.0px;font-size:42px;color:#000;white-space:pre;line-height:normal;transform:scaleX(1.0660);transform-origin:0 0;-webkit-text-stroke:1px #fff;">100 %</div>
<div style="position:absolute;left:1835.2px;top:1445.5px;font-size:42px;color:#000;white-space:pre;line-height:normal;transform:scaleX(1.0474);transform-origin:0 0;-webkit-text-stroke:1px #fff;">84 %</div>
<div style="position:absolute;left:1834.8px;top:1502.2px;font-size:42px;color:#000;white-space:pre;line-height:normal;transform:scaleX(1.0522);transform-origin:0 0;-webkit-text-stroke:1px #fff;">68 %</div>
<div style="position:absolute;left:1835.2px;top:1556.7px;font-size:42px;color:#000;white-space:pre;line-height:normal;transform:scaleX(1.0474);transform-origin:0 0;-webkit-text-stroke:1px #fff;">52 %</div>
<div style="position:absolute;left:1835.5px;top:1613.5px;font-size:42px;color:#000;white-space:pre;line-height:normal;transform:scaleX(1.0450);transform-origin:0 0;-webkit-text-stroke:1px #fff;">36 %</div>
<div style="position:absolute;left:1834.8px;top:1670.5px;font-size:42px;color:#000;white-space:pre;line-height:normal;transform:scaleX(1.0522);transform-origin:0 0;-webkit-text-stroke:1px #fff;">20 %</div>
<div style="position:absolute;left:2234.0px;top:1635.2px;width:1706.0px;height:4.0px;background:#eeeeee;"></div>
<div style="position:absolute;left:2234.0px;top:1584.6px;width:1706.0px;height:4.0px;background:#eeeeee;"></div>
<div style="position:absolute;left:2234.0px;top:1529.6px;width:1706.0px;height:4.0px;background:#eeeeee;"></div>
<div style="position:absolute;left:2234.0px;top:1475.4px;width:1706.0px;height:4.0px;background:#eeeeee;"></div>
<div style="position:absolute;left:2234.0px;top:1426.3px;width:1706.0px;height:4.0px;background:#eeeeee;"></div>
<div style="position:absolute;left:2234.0px;top:1370.6px;width:1706.0px;height:4.0px;background:#eeeeee;"></div>
<div style="position:absolute;left:2299.0px;top:1369.0px;width:4.0px;height:315.0px;background:#e6e6e6;"></div>
<div style="position:absolute;left:2444.8px;top:1369.0px;width:4.0px;height:315.0px;background:#e6e6e6;"></div>
<div style="position:absolute;left:2586.0px;top:1369.0px;width:4.0px;height:315.0px;background:#e6e6e6;"></div>
<div style="position:absolute;left:2727.5px;top:1369.0px;width:4.0px;height:315.0px;background:#e6e6e6;"></div>
<div style="position:absolute;left:2872.2px;top:1369.0px;width:4.0px;height:315.0px;background:#e6e6e6;"></div>
<div style="position:absolute;left:3013.6px;top:1369.0px;width:4.0px;height:315.0px;background:#e6e6e6;"></div>
<div style="position:absolute;left:3155.0px;top:1369.0px;width:4.0px;height:315.0px;background:#e6e6e6;"></div>
<div style="position:absolute;left:3300.4px;top:1369.0px;width:4.0px;height:315.0px;background:#e6e6e6;"></div>
<div style="position:absolute;left:3441.4px;top:1369.0px;width:4.0px;height:315.0px;background:#e6e6e6;"></div>
<div style="position:absolute;left:3582.8px;top:1369.0px;width:4.0px;height:315.0px;background:#e6e6e6;"></div>
<div style="position:absolute;left:3728.0px;top:1369.0px;width:4.0px;height:315.0px;background:#e6e6e6;"></div>
<div style="position:absolute;left:3870.0px;top:1369.0px;width:4.0px;height:315.0px;background:#e6e6e6;"></div>
<div style="position:absolute;left:2208.0px;top:1683.5px;width:21.0px;height:4.0px;background:#a9a9a9;"></div>
<div style="position:absolute;left:2208.0px;top:1687.5px;width:21.0px;height:4.0px;background:#d3d3d3;"></div>
<div style="position:absolute;left:2208.0px;top:1633.2px;width:21.0px;height:4.0px;background:#a9a9a9;"></div>
<div style="position:absolute;left:2208.0px;top:1637.2px;width:21.0px;height:4.0px;background:#d3d3d3;"></div>
<div style="position:absolute;left:2208.0px;top:1582.6px;width:21.0px;height:4.0px;background:#a9a9a9;"></div>
<div style="position:absolute;left:2208.0px;top:1586.6px;width:21.0px;height:4.0px;background:#d3d3d3;"></div>
<div style="position:absolute;left:2208.0px;top:1527.6px;width:21.0px;height:4.0px;background:#a9a9a9;"></div>
<div style="position:absolute;left:2208.0px;top:1531.6px;width:21.0px;height:4.0px;background:#d3d3d3;"></div>
<div style="position:absolute;left:2208.0px;top:1473.4px;width:21.0px;height:4.0px;background:#a9a9a9;"></div>
<div style="position:absolute;left:2208.0px;top:1477.4px;width:21.0px;height:4.0px;background:#d3d3d3;"></div>
<div style="position:absolute;left:2208.0px;top:1424.3px;width:21.0px;height:4.0px;background:#a9a9a9;"></div>
<div style="position:absolute;left:2208.0px;top:1428.3px;width:21.0px;height:4.0px;background:#d3d3d3;"></div>
<div style="position:absolute;left:2208.0px;top:1368.6px;width:21.0px;height:4.0px;background:#a9a9a9;"></div>
<div style="position:absolute;left:2208.0px;top:1372.6px;width:21.0px;height:4.0px;background:#d3d3d3;"></div>
<div style="position:absolute;left:2229.0px;top:1369.0px;width:5.0px;height:322.0px;background:#828282;"></div>
<div style="position:absolute;left:2208.0px;top:1684.0px;width:1732.0px;height:4.0px;background:#a9a9a9;"></div>
<div style="position:absolute;left:2208.0px;top:1688.0px;width:1732.0px;height:3.0px;background:#d3d3d3;"></div>
<div style="position:absolute;left:2299.0px;top:1691.0px;width:4.0px;height:18.0px;background:#828282;"></div>
<div style="position:absolute;left:2299.0px;top:1709.0px;width:4.0px;height:4.0px;background:#c8c8c8;"></div>
<div style="position:absolute;left:2444.8px;top:1691.0px;width:4.0px;height:18.0px;background:#828282;"></div>
<div style="position:absolute;left:2444.8px;top:1709.0px;width:4.0px;height:4.0px;background:#c8c8c8;"></div>
<div style="position:absolute;left:2586.0px;top:1691.0px;width:4.0px;height:18.0px;background:#828282;"></div>
<div style="position:absolute;left:2586.0px;top:1709.0px;width:4.0px;height:4.0px;background:#c8c8c8;"></div>
<div style="position:absolute;left:2727.5px;top:1691.0px;width:4.0px;height:18.0px;background:#828282;"></div>
<div style="position:absolute;left:2727.5px;top:1709.0px;width:4.0px;height:4.0px;background:#c8c8c8;"></div>
<div style="position:absolute;left:2872.2px;top:1691.0px;width:4.0px;height:18.0px;background:#828282;"></div>
<div style="position:absolute;left:2872.2px;top:1709.0px;width:4.0px;height:4.0px;background:#c8c8c8;"></div>
<div style="position:absolute;left:3013.6px;top:1691.0px;width:4.0px;height:18.0px;background:#828282;"></div>
<div style="position:absolute;left:3013.6px;top:1709.0px;width:4.0px;height:4.0px;background:#c8c8c8;"></div>
<div style="position:absolute;left:3155.0px;top:1691.0px;width:4.0px;height:18.0px;background:#828282;"></div>
<div style="position:absolute;left:3155.0px;top:1709.0px;width:4.0px;height:4.0px;background:#c8c8c8;"></div>
<div style="position:absolute;left:3300.4px;top:1691.0px;width:4.0px;height:18.0px;background:#828282;"></div>
<div style="position:absolute;left:3300.4px;top:1709.0px;width:4.0px;height:4.0px;background:#c8c8c8;"></div>
<div style="position:absolute;left:3441.4px;top:1691.0px;width:4.0px;height:18.0px;background:#828282;"></div>
<div style="position:absolute;left:3441.4px;top:1709.0px;width:4.0px;height:4.0px;background:#c8c8c8;"></div>
<div style="position:absolute;left:3582.8px;top:1691.0px;width:4.0px;height:18.0px;background:#828282;"></div>
<div style="position:absolute;left:3582.8px;top:1709.0px;width:4.0px;height:4.0px;background:#c8c8c8;"></div>
<div style="position:absolute;left:3728.0px;top:1691.0px;width:4.0px;height:18.0px;background:#828282;"></div>
<div style="position:absolute;left:3728.0px;top:1709.0px;width:4.0px;height:4.0px;background:#c8c8c8;"></div>
<div style="position:absolute;left:3870.0px;top:1691.0px;width:4.0px;height:18.0px;background:#828282;"></div>
<div style="position:absolute;left:3870.0px;top:1709.0px;width:4.0px;height:4.0px;background:#c8c8c8;"></div>
<div style="position:absolute;left:2250.0px;top:1555.9px;width:99.0px;height:68.8px;border:4px solid #3b95c7;background:rgba(59,149,199,0.15);"></div>
<div style="position:absolute;left:2250.0px;top:1589.6px;width:99.0px;height:4.0px;background:#3b95c7;"></div>
<div style="position:absolute;left:2250.0px;top:1426.3px;width:99.0px;height:4.0px;background:#3b95c7;"></div>
<div style="position:absolute;left:2250.0px;top:1633.7px;width:99.0px;height:4.0px;background:#3b95c7;"></div>
<div style="position:absolute;left:2298.0px;top:1428.3px;width:4.0px;height:129.6px;background:#3b95c7;"></div>
<div style="position:absolute;left:2298.0px;top:1622.7px;width:4.0px;height:13.0px;background:#3b95c7;"></div>
<div style="position:absolute;left:2391.5px;top:1574.0px;width:99.0px;height:54.5px;border:4px solid #3b95c7;background:rgba(59,149,199,0.15);"></div>
<div style="position:absolute;left:2391.5px;top:1603.9px;width:99.0px;height:4.0px;background:#3b95c7;"></div>
<div style="position:absolute;left:2391.5px;top:1485.9px;width:99.0px;height:4.0px;background:#3b95c7;"></div>
<div style="position:absolute;left:2391.5px;top:1633.7px;width:99.0px;height:4.0px;background:#3b95c7;"></div>
<div style="position:absolute;left:2440.9px;top:1487.9px;width:4.0px;height:88.1px;background:#3b95c7;"></div>
<div style="position:absolute;left:2440.9px;top:1626.6px;width:4.0px;height:9.1px;background:#3b95c7;"></div>
<div style="position:absolute;left:2536.1px;top:1590.6px;width:99.0px;height:45.7px;border:4px solid #3b95c7;background:rgba(59,149,199,0.15);"></div>
<div style="position:absolute;left:2536.1px;top:1611.9px;width:99.0px;height:4.0px;background:#3b95c7;"></div>
<div style="position:absolute;left:2536.1px;top:1514.4px;width:99.0px;height:4.0px;background:#3b95c7;"></div>
<div style="position:absolute;left:2536.1px;top:1635.0px;width:99.0px;height:4.0px;background:#3b95c7;"></div>
<div style="position:absolute;left:2585.9px;top:1516.4px;width:4.0px;height:76.2px;background:#3b95c7;"></div>
<div style="position:absolute;left:2585.9px;top:1634.4px;width:4.0px;height:2.6px;background:#3b95c7;"></div>
<div style="position:absolute;left:2677.5px;top:1598.1px;width:99.0px;height:39.5px;border:4px solid #3b95c7;background:rgba(59,149,199,0.15);"></div>
<div style="position:absolute;left:2677.5px;top:1619.7px;width:99.0px;height:4.0px;background:#3b95c7;"></div>
<div style="position:absolute;left:2677.5px;top:1527.9px;width:99.0px;height:4.0px;background:#3b95c7;"></div>
<div style="position:absolute;left:2677.5px;top:1635.0px;width:99.0px;height:4.0px;background:#3b95c7;"></div>
<div style="position:absolute;left:2727.3px;top:1529.9px;width:4.0px;height:70.2px;background:#3b95c7;"></div>
<div style="position:absolute;left:2727.3px;top:1635.7px;width:4.0px;height:1.3px;background:#3b95c7;"></div>
<div style="position:absolute;left:2818.8px;top:1586.2px;width:99.0px;height:52.7px;border:4px solid #3b95c7;background:rgba(59,149,199,0.15);"></div>
<div style="position:absolute;left:2818.8px;top:1611.9px;width:99.0px;height:4.0px;background:#3b95c7;"></div>
<div style="position:absolute;left:2818.8px;top:1502.8px;width:99.0px;height:4.0px;background:#3b95c7;"></div>
<div style="position:absolute;left:2818.8px;top:1637.5px;width:99.0px;height:4.0px;background:#3b95c7;"></div>
<div style="position:absolute;left:2868.3px;top:1504.8px;width:4.0px;height:83.5px;background:#3b95c7;"></div>
<div style="position:absolute;left:2868.3px;top:1637.0px;width:4.0px;height:2.6px;background:#3b95c7;"></div>
<div style="position:absolute;left:2964.2px;top:1582.3px;width:99.0px;height:54.0px;border:4px solid #3b95c7;background:rgba(59,149,199,0.15);"></div>
<div style="position:absolute;left:2964.2px;top:1611.9px;width:99.0px;height:4.0px;background:#3b95c7;"></div>
<div style="position:absolute;left:2964.2px;top:1536.2px;width:99.0px;height:4.0px;background:#3b95c7;"></div>
<div style="position:absolute;left:2964.2px;top:1635.0px;width:99.0px;height:4.0px;background:#3b95c7;"></div>
<div style="position:absolute;left:3013.6px;top:1538.2px;width:4.0px;height:46.1px;background:#3b95c7;"></div>
<div style="position:absolute;left:3013.6px;top:1634.4px;width:4.0px;height:2.6px;background:#3b95c7;"></div>
<div style="position:absolute;left:3105.5px;top:1590.6px;width:99.0px;height:48.3px;border:4px solid #3b95c7;background:rgba(59,149,199,0.15);"></div>
<div style="position:absolute;left:3105.5px;top:1616.0px;width:99.0px;height:4.0px;background:#3b95c7;"></div>
<div style="position:absolute;left:3105.5px;top:1527.9px;width:99.0px;height:4.0px;background:#3b95c7;"></div>
<div style="position:absolute;left:3105.5px;top:1637.5px;width:99.0px;height:4.0px;background:#3b95c7;"></div>
<div style="position:absolute;left:3155.0px;top:1529.9px;width:4.0px;height:62.7px;background:#3b95c7;"></div>
<div style="position:absolute;left:3155.0px;top:1637.0px;width:4.0px;height:2.6px;background:#3b95c7;"></div>
<div style="position:absolute;left:3247.1px;top:1586.2px;width:99.0px;height:52.7px;border:4px solid #3b95c7;background:rgba(59,149,199,0.15);"></div>
<div style="position:absolute;left:3247.1px;top:1611.4px;width:99.0px;height:4.0px;background:#3b95c7;"></div>
<div style="position:absolute;left:3247.1px;top:1485.9px;width:99.0px;height:4.0px;background:#3b95c7;"></div>
<div style="position:absolute;left:3247.1px;top:1637.5px;width:99.0px;height:4.0px;background:#3b95c7;"></div>
<div style="position:absolute;left:3296.0px;top:1487.9px;width:4.0px;height:100.3px;background:#3b95c7;"></div>
<div style="position:absolute;left:3296.0px;top:1637.0px;width:4.0px;height:2.6px;background:#3b95c7;"></div>
<div style="position:absolute;left:3392.0px;top:1574.0px;width:99.0px;height:49.6px;border:4px solid #3b95c7;background:rgba(59,149,199,0.15);"></div>
<div style="position:absolute;left:3392.0px;top:1598.1px;width:99.0px;height:4.0px;background:#3b95c7;"></div>
<div style="position:absolute;left:3392.0px;top:1463.9px;width:99.0px;height:4.0px;background:#3b95c7;"></div>
<div style="position:absolute;left:3392.0px;top:1633.7px;width:99.0px;height:4.0px;background:#3b95c7;"></div>
<div style="position:absolute;left:3441.4px;top:1465.9px;width:4.0px;height:110.2px;background:#3b95c7;"></div>
<div style="position:absolute;left:3441.4px;top:1621.7px;width:4.0px;height:14.0px;background:#3b95c7;"></div>
<div style="position:absolute;left:3533.5px;top:1586.2px;width:99.0px;height:50.1px;border:4px solid #3b95c7;background:rgba(59,149,199,0.15);"></div>
<div style="position:absolute;left:3533.5px;top:1611.9px;width:99.0px;height:4.0px;background:#3b95c7;"></div>
<div style="position:absolute;left:3533.5px;top:1518.8px;width:99.0px;height:4.0px;background:#3b95c7;"></div>
<div style="position:absolute;left:3533.5px;top:1635.0px;width:99.0px;height:4.0px;background:#3b95c7;"></div>
<div style="position:absolute;left:3582.8px;top:1520.8px;width:4.0px;height:67.4px;background:#3b95c7;"></div>
<div style="position:absolute;left:3582.8px;top:1634.4px;width:4.0px;height:2.6px;background:#3b95c7;"></div>
<div style="position:absolute;left:3674.3px;top:1552.8px;width:99.0px;height:67.0px;border:4px solid #3b95c7;background:rgba(59,149,199,0.15);"></div>
<div style="position:absolute;left:3674.3px;top:1586.2px;width:99.0px;height:4.0px;background:#3b95c7;"></div>
<div style="position:absolute;left:3674.3px;top:1442.4px;width:99.0px;height:4.0px;background:#3b95c7;"></div>
<div style="position:absolute;left:3674.3px;top:1633.7px;width:99.0px;height:4.0px;background:#3b95c7;"></div>
<div style="position:absolute;left:3723.8px;top:1444.4px;width:4.0px;height:110.4px;background:#3b95c7;"></div>
<div style="position:absolute;left:3723.8px;top:1617.8px;width:4.0px;height:17.9px;background:#3b95c7;"></div>
<div style="position:absolute;left:3819.5px;top:1564.5px;width:99.0px;height:59.2px;border:4px solid #3b95c7;background:rgba(59,149,199,0.15);"></div>
<div style="position:absolute;left:3819.5px;top:1594.8px;width:99.0px;height:4.0px;background:#3b95c7;"></div>
<div style="position:absolute;left:3819.5px;top:1459.0px;width:99.0px;height:4.0px;background:#3b95c7;"></div>
<div style="position:absolute;left:3819.5px;top:1633.7px;width:99.0px;height:4.0px;background:#3b95c7;"></div>
<div style="position:absolute;left:3869.8px;top:1461.0px;width:4.0px;height:105.5px;background:#3b95c7;"></div>
<div style="position:absolute;left:3869.8px;top:1621.7px;width:4.0px;height:14.0px;background:#3b95c7;"></div>
<div style="position:absolute;left:2112.3px;top:1400.8px;font-size:50px;color:#333;white-space:pre;line-height:normal;transform:scaleX(0.9775);transform-origin:0 0;-webkit-text-stroke:1px #fff;">100</div>
<div style="position:absolute;left:2164.9px;top:1663.8px;font-size:50px;color:#333;white-space:pre;line-height:normal;transform:scaleX(1.0417);transform-origin:0 0;-webkit-text-stroke:1px #fff;">0</div>
<div style="position:absolute;left:2077.8px;top:1657.8px;font-size:50px;color:#444;white-space:pre;line-height:normal;transform-origin:2.2px 45.2px;transform:rotate(-90deg) scaleX(0.9748);-webkit-text-stroke:1px #fff;">State Of Charge</div>
<div style="position:absolute;left:2265.0px;top:1736.8px;font-size:50px;color:#333;white-space:pre;line-height:normal;transform:scaleX(0.9199);transform-origin:0 0;-webkit-text-stroke:1px #fff;">Jan</div>
<div style="position:absolute;left:2405.8px;top:1736.8px;font-size:50px;color:#333;white-space:pre;line-height:normal;transform:scaleX(0.9325);transform-origin:0 0;-webkit-text-stroke:1px #fff;">Feb</div>
<div style="position:absolute;left:2543.0px;top:1736.8px;font-size:50px;color:#333;white-space:pre;line-height:normal;transform:scaleX(1.0061);transform-origin:0 0;-webkit-text-stroke:1px #fff;">Mar</div>
<div style="position:absolute;left:2688.2px;top:1736.8px;font-size:50px;color:#333;white-space:pre;line-height:normal;transform:scaleX(1.0680);transform-origin:0 0;-webkit-text-stroke:1px #fff;">Apr</div>
<div style="position:absolute;left:2824.1px;top:1736.8px;font-size:50px;color:#333;white-space:pre;line-height:normal;transform:scaleX(1.0166);transform-origin:0 0;-webkit-text-stroke:1px #fff;">May</div>
<div style="position:absolute;left:2978.5px;top:1736.8px;font-size:50px;color:#333;white-space:pre;line-height:normal;transform:scaleX(0.9472);transform-origin:0 0;-webkit-text-stroke:1px #fff;">Jun</div>
<div style="position:absolute;left:3127.8px;top:1736.8px;font-size:50px;color:#333;white-space:pre;line-height:normal;transform:scaleX(0.9540);transform-origin:0 0;-webkit-text-stroke:1px #fff;">Jul</div>
<div style="position:absolute;left:3261.4px;top:1736.8px;font-size:50px;color:#333;white-space:pre;line-height:normal;transform:scaleX(0.9535);transform-origin:0 0;-webkit-text-stroke:1px #fff;">Aug</div>
<div style="position:absolute;left:3400.0px;top:1736.8px;font-size:50px;color:#333;white-space:pre;line-height:normal;transform:scaleX(0.9735);transform-origin:0 0;-webkit-text-stroke:1px #fff;">Sep</div>
<div style="position:absolute;left:3543.1px;top:1736.8px;font-size:50px;color:#333;white-space:pre;line-height:normal;transform:scaleX(1.0445);transform-origin:0 0;-webkit-text-stroke:1px #fff;">Oct</div>
<div style="position:absolute;left:3682.7px;top:1736.8px;font-size:50px;color:#333;white-space:pre;line-height:normal;transform:scaleX(1.0195);transform-origin:0 0;-webkit-text-stroke:1px #fff;">Nov</div>
<div style="position:absolute;left:3826.8px;top:1736.8px;font-size:50px;color:#333;white-space:pre;line-height:normal;transform:scaleX(0.9851);transform-origin:0 0;-webkit-text-stroke:1px #fff;">Dec</div>
</body></html>
